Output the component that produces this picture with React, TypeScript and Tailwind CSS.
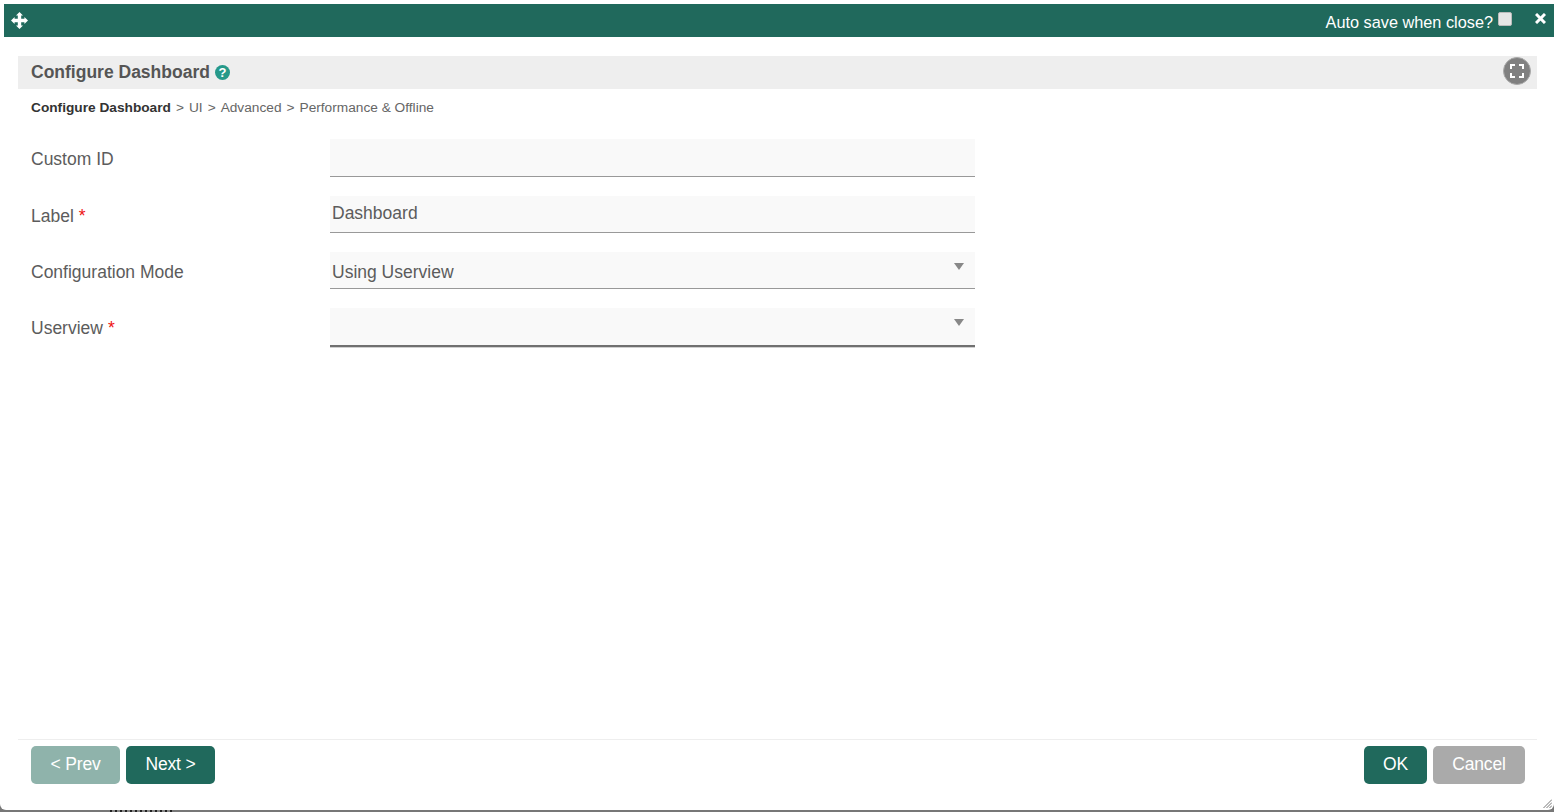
const fields = [
  { label: "Custom ID", value: "", required: false, select: false, rowClass: "h-[38px] mb-[19px]", inputClass: "border-b border-[#999] pt-[6px]" },
  { label: "Label", value: "Dashboard", required: true, select: false, rowClass: "h-[37px] mb-[19px]", inputClass: "border-b border-[#999] pt-[5px]" },
  { label: "Configuration Mode", value: "Using Userview", required: false, select: true, rowClass: "h-[37px] mb-[19px]", inputClass: "border-b border-[#999] pt-[8px]" },
  { label: "Userview", value: "", required: true, select: true, rowClass: "h-[39px]", inputClass: "border-b-2 border-[#707070] pt-[6px] shadow-[0_1px_0_#d0d0d0]" },
];

function MoveIcon() {
  return (
    <svg width="17" height="17" viewBox="0 0 17 17" fill="#fff">
      <path d="M8.5 0 L12 3.6 L10.2 3.6 L10.2 6.8 L13.4 6.8 L13.4 5 L17 8.5 L13.4 12 L13.4 10.2 L10.2 10.2 L10.2 13.4 L12 13.4 L8.5 17 L5 13.4 L6.8 13.4 L6.8 10.2 L3.6 10.2 L3.6 12 L0 8.5 L3.6 5 L3.6 6.8 L6.8 6.8 L6.8 3.6 L5 3.6 Z" />
    </svg>
  );
}

function FullscreenIcon() {
  return (
    <svg width="14" height="14" viewBox="0 0 14 14" fill="none" stroke="#fff" strokeWidth="2">
      <path d="M1 5 V1 H5 M9 1 H13 V5 M13 9 V13 H9 M5 13 H1 V9" />
    </svg>
  );
}

function HelpIcon() {
  return (
    <span className="ml-[5px] flex h-[15px] w-[15px] items-center justify-center rounded-full bg-[#26998a] text-[13px] font-bold leading-none text-white">
      ?
    </span>
  );
}

export default function App() {
  return (
    <div className="relative h-[812px] w-[1554px] overflow-hidden bg-[#777] font-['Liberation_Sans',Arial,sans-serif]">
      <div className="relative flex h-[810px] flex-col rounded-b-[6px] bg-white pl-1 pt-1">
        {/* title bar */}
        <div className="flex h-[33px] shrink-0 items-center justify-between bg-[#20695c] pl-[7px] pr-[8px] text-white">
          <MoveIcon />
          <div className="flex items-start self-start">
            <span className="mt-[8px] text-[16.3px] leading-[20px]">Auto save when close?</span>
            <span className="ml-[5px] mt-[8px] h-[14px] w-[14px] rounded-[2px] border border-[#bbb] bg-[#e6e6e6]" />
            <svg className="ml-[23px] mt-[9px]" width="11" height="11" viewBox="0 0 11 11" stroke="#fff" strokeWidth="3">
              <path d="M1 1 L10 10 M10 1 L1 10" />
            </svg>
          </div>
        </div>

        <div className="flex flex-1 flex-col pl-[14px] pr-[17px]">
          {/* heading */}
          <div className="mt-[19px] flex h-[33px] shrink-0 items-center justify-between bg-[#eeeeee] pl-[13px] pr-[6px]">
            <div className="flex items-center text-[17.5px] font-bold text-[#555]">
              Configure Dashboard
              <HelpIcon />
            </div>
            <div className="-mt-[4px] flex h-[28px] w-[28px] items-center justify-center rounded-full border border-[#aaa] bg-[#808080]">
              <FullscreenIcon />
            </div>
          </div>

          {/* steps */}
          <div className="mt-[10px] flex h-[18px] pl-[13px] text-[13.7px] leading-[18px] text-[#666]">
            <span className="font-bold text-[#333]">Configure Dashboard</span>
            <span className="ml-[5px]">&gt;</span>
            <span className="ml-[5px]">UI</span>
            <span className="ml-[5px]">&gt;</span>
            <span className="ml-[5px]">Advanced</span>
            <span className="ml-[5px]">&gt;</span>
            <span className="ml-[5px]">Performance &amp; Offline</span>
          </div>

          {/* form */}
          <div className="mt-[22px] pl-[13px]">
            {fields.map((f) => (
              <div key={f.label} className={`flex ${f.rowClass}`}>
                <div className="w-[299px] shrink-0 pt-[8px] text-[17.5px] leading-[24px] text-[#5c5c5c]">
                  {f.label}
                  {f.required && <span className="ml-[5px] text-[#ee1111]">*</span>}
                </div>
                <div className={`relative h-full w-[645px] bg-[#f9f9f9] pl-[2px] text-[17.5px] leading-[24px] text-[#5c5c5c] ${f.inputClass}`}>
                  {f.value}
                  {f.select && (
                    <span className="absolute right-[11px] top-[11px] h-0 w-0 border-x-[5px] border-t-[7px] border-x-transparent border-t-[#888]" />
                  )}
                </div>
              </div>
            ))}
          </div>

          {/* footer */}
          <div className="mb-[26px] mt-auto flex justify-between border-t border-[#eeeeee] pl-[13px] pr-[12px] pt-[6px]">
            <div className="flex gap-[6px]">
              <button className="h-[38px] w-[89px] rounded-[5px] bg-[#8fb3ab] pb-[2px] text-[17.5px] tracking-[-0.15px] text-white">&lt; Prev</button>
              <button className="h-[38px] w-[89px] rounded-[5px] bg-[#20695c] pb-[2px] text-[17.5px] tracking-[-0.15px] text-white">Next &gt;</button>
            </div>
            <div className="flex gap-[6px]">
              <button className="h-[38px] w-[63px] rounded-[5px] bg-[#20695c] pb-[2px] text-[17.5px] tracking-[-0.15px] text-white">OK</button>
              <button className="h-[38px] w-[92px] rounded-[5px] bg-[#aaaaaa] pb-[2px] text-[17.5px] tracking-[-0.15px] text-white">Cancel</button>
            </div>
          </div>
        </div>

        {/* resize grip */}
        <svg className="absolute bottom-[2px] right-[2px]" width="9" height="9" viewBox="0 0 9 9" stroke="#777" strokeWidth="1">
          <path d="M0.5 9 L9 0.5 M3.5 9 L9 3.5 M6.5 9 L9 6.5" />
        </svg>
      </div>
      {/* bits of the page behind the dialog */}
      <div className="absolute bottom-0 left-[110px] h-[2px] w-[62px] bg-[repeating-linear-gradient(90deg,#222_0,#222_2px,#888_2px,#888_5px)]" />
    </div>
  );
}
